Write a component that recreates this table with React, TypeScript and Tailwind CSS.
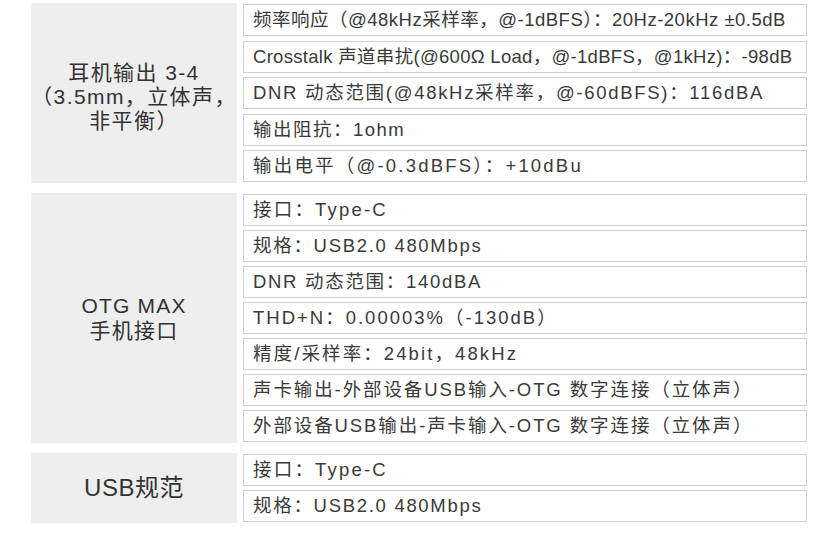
import React from 'react';

interface SpecRow {
  text: string;
  tracking: string;
}

interface SpecSection {
  label: React.ReactNode;
  labelClass: string;
  rows: SpecRow[];
  gapClass: string;
}

const sections: SpecSection[] = [
  {
    label: (
      <>
        耳机输出 3-4
        <br />
        （3.5mm，立体声，
        <br />
        非平衡）
      </>
    ),
    labelClass: 'text-[21px] leading-[24px] tracking-[1.4px] pt-[7px]',
    gapClass: 'gap-[4.5px]',
    rows: [
      { text: '频率响应（@48kHz采样率，@-1dBFS）：20Hz-20kHz ±0.5dB', tracking: 'tracking-[0.5px]' },
      { text: 'Crosstalk 声道串扰(@600Ω Load，@-1dBFS，@1kHz)：-98dB', tracking: 'tracking-[0.3px]' },
      { text: 'DNR 动态范围(@48kHz采样率，@-60dBFS)：116dBA', tracking: 'tracking-[1.7px]' },
      { text: '输出阻抗：1ohm', tracking: 'tracking-[1.5px]' },
      { text: '输出电平（@-0.3dBFS）：+10dBu', tracking: 'tracking-[2.2px]' },
    ],
  },
  {
    label: (
      <>
        OTG MAX
        <br />
        手机接口
      </>
    ),
    labelClass: 'text-[21px] leading-[25px] tracking-[1.2px]',
    gapClass: 'gap-1',
    rows: [
      { text: '接口：Type-C', tracking: 'tracking-[2.2px]' },
      { text: '规格：USB2.0 480Mbps', tracking: 'tracking-[1.7px]' },
      { text: 'DNR 动态范围：140dBA', tracking: 'tracking-[1.7px]' },
      { text: 'THD+N：0.00003%（-130dB）', tracking: 'tracking-[2px]' },
      { text: '精度/采样率：24bit，48kHz', tracking: 'tracking-[2.1px]' },
      { text: '声卡输出-外部设备USB输入-OTG 数字连接（立体声）', tracking: 'tracking-[1.9px]' },
      { text: '外部设备USB输出-声卡输入-OTG 数字连接（立体声）', tracking: 'tracking-[1.9px]' },
    ],
  },
  {
    label: 'USB规范',
    labelClass: 'text-[24px] leading-[28px] tracking-[0.5px]',
    gapClass: 'gap-1',
    rows: [
      { text: '接口：Type-C', tracking: 'tracking-[2.2px]' },
      { text: '规格：USB2.0 480Mbps', tracking: 'tracking-[1.7px]' },
    ],
  },
];

const Section: React.FC<{ section: SpecSection }> = ({ section }) => (
  <div className="flex gap-[6px]">
    <div className="w-[206px] shrink-0 bg-[#eeeeee] flex items-center justify-center text-center text-[#333333]">
      <div className={section.labelClass}>{section.label}</div>
    </div>
    <div className={`flex-1 flex flex-col py-px ${section.gapClass}`}>
      {section.rows.map((row, i) => (
        <div
          key={i}
          className={`h-[32px] flex items-center px-[9px] bg-white border border-[#cfcfcf] text-[18.5px] text-[#3a3a3a] whitespace-nowrap ${row.tracking}`}
        >
          {row.text}
        </div>
      ))}
    </div>
  </div>
);

export default function App() {
  return (
    <div
      className="w-[838px] h-[558px] bg-white pt-[3px] pl-[31px] pr-[31px] flex flex-col gap-[10px]"
      style={{ fontFamily: '"Liberation Sans", "Noto Sans CJK SC", sans-serif' }}
    >
      {sections.map((s, i) => (
        <Section key={i} section={s} />
      ))}
    </div>
  );
}
